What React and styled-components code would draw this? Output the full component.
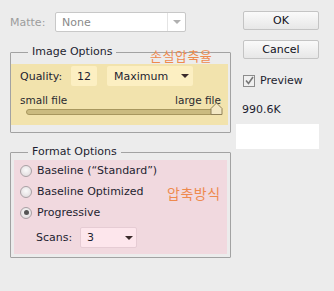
import styled, { createGlobalStyle } from 'styled-components';

const GlobalStyle = createGlobalStyle`
  html, body {
    margin: 0;
    padding: 0;
    background: #ececec;
  }
  body {
    font-family: "DejaVu Sans", Verdana, sans-serif;
    font-size: 11px;
    color: #1e1e30;
  }
`;

const Dialog = styled.div`
  width: 334px;
  height: 291px;
  display: flex;
  background: #ececec;
`;

const LeftColumn = styled.div`
  width: 221px;
  padding: 12px 0 0 10px;
  display: flex;
  flex-direction: column;
`;

const RightColumn = styled.div`
  padding: 11px 0 0 5px;
  display: flex;
  flex-direction: column;
`;

const Row = styled.div`
  display: flex;
  align-items: center;
`;

const Label = styled.span`
  width: ${({ width }) => (width ? `${width}px` : 'auto')};
  color: ${({ muted }) => (muted ? '#9c9c9c' : '#1e1e30')};
  white-space: nowrap;
`;

const Select = styled.div`
  box-sizing: border-box;
  width: ${({ width }) => width}px;
  height: ${({ height }) => height || 20}px;
  margin-left: ${({ offset }) => offset || 0}px;
  display: flex;
  align-items: center;
  padding-left: 6px;
  background: ${({ bg }) => bg || '#fff'};
  border: 1px solid ${({ border }) => border || 'transparent'};
  border-radius: 2px;
  color: ${({ muted }) => (muted ? '#8a8a8a' : '#1e1e30')};
`;

const SelectText = styled.span`
  flex: 1;
`;

const ArrowCell = styled.span`
  width: ${({ divider }) => (divider ? 17 : 14)}px;
  height: 100%;
  display: flex;
  align-items: center;
  justify-content: center;
  border-left: ${({ divider }) => (divider ? '1px solid #e4e4e4' : 'none')};
`;

const Arrow = styled.span`
  width: 0;
  height: 0;
  border-left: 4px solid transparent;
  border-right: 4px solid transparent;
  border-top: 4px solid ${({ color }) => color || '#3a2a2a'};
`;

const Group = styled.div`
  position: relative;
  box-sizing: border-box;
  width: 221px;
  height: ${({ height }) => height}px;
  margin-top: ${({ top }) => top}px;
  border: 1px solid #a2a2a2;
  border-radius: 1px;
  padding: ${({ pad }) => pad};
`;

const Legend = styled.span`
  position: absolute;
  top: -8px;
  left: 17px;
  padding: 0 4px;
  background: #ececec;
  color: #1e1e30;
`;

const Note = styled.span`
  position: absolute;
  left: ${({ left }) => left}px;
  top: ${({ top }) => top}px;
  font-family: "Noto Sans CJK KR", sans-serif;
  font-size: ${({ size }) => size || 13}px;
  color: #ee8a4e;
  letter-spacing: 0.5px;
`;

const Highlight = styled.div`
  box-sizing: border-box;
  height: 100%;
  background: ${({ tone }) => tone};
  padding: ${({ pad }) => pad};
  display: flex;
  flex-direction: column;
`;

const Input = styled.div`
  box-sizing: border-box;
  width: 26px;
  height: 20px;
  display: flex;
  align-items: center;
  padding-left: 6px;
  background: #fcefc2;
  border-radius: 2px;
`;

const SliderLabels = styled.div`
  display: flex;
  justify-content: space-between;
  margin: 8px 7px 0 0;
  font-size: 10.5px;
  color: #2a2a30;
`;

const SliderTrack = styled.div`
  position: relative;
  margin: 3px 8px 0 6px;
  height: 4px;
  border: 1px solid #a8975e;
  border-radius: 3px;
  background: #cbbb80;
`;

const Thumb = styled.svg`
  position: absolute;
  right: -4px;
  top: -8px;
`;

const RadioRow = styled.div`
  position: relative;
  display: flex;
  align-items: center;
  gap: 5px;
  height: 21px;
`;

const Radio = styled.span`
  box-sizing: border-box;
  width: 12px;
  height: 12px;
  border-radius: 50%;
  border: 1px solid #a9a0a4;
  background: radial-gradient(circle at 50% 40%, #fafafa 0%, #dcd6d8 100%);
  display: flex;
  align-items: center;
  justify-content: center;

  &::after {
    content: '';
    width: 5px;
    height: 5px;
    border-radius: 50%;
    background: ${({ checked }) => (checked ? '#555' : 'transparent')};
  }
`;

const ScansRow = styled(Row)`
  margin-top: 4px;
  padding-left: 16px;
`;

const Button = styled.button`
  box-sizing: border-box;
  width: 76px;
  height: 19px;
  margin-left: 7px;
  margin-bottom: ${({ gap }) => gap || 0}px;
  border: 1px solid #c4c4c4;
  border-radius: 2px;
  background: linear-gradient(#fafafa, #e7e7e7);
  font-family: "DejaVu Sans", Verdana, sans-serif;
  font-size: 11px;
  color: #101020;
  padding: 0;
`;

const CheckRow = styled.div`
  display: flex;
  align-items: center;
  gap: 5px;
  margin: 15px 0 0 7px;
`;

const Checkbox = styled.span`
  box-sizing: border-box;
  width: 12px;
  height: 12px;
  border: 1px solid #8c8c8c;
  background: #f0f0f0;
  display: flex;
  align-items: center;
  justify-content: center;
`;

const Size = styled.div`
  margin: 16px 0 0 6px;
`;

const PreviewBox = styled.div`
  width: 83px;
  height: 25px;
  margin-top: 8px;
  background: #fff;
`;

const App = () => {
  return (
    <>
      <GlobalStyle />
      <Dialog>
        <LeftColumn>
          <Row>
            <Label width={45} muted>Matte:</Label>
            <Select width={131} border="#c8c8c8" muted>
              <SelectText>None</SelectText>
              <ArrowCell divider>
                <Arrow color="#b0b0b0" />
              </ArrowCell>
            </Select>
          </Row>

          <Group height={81} top={20} pad="11px 2px 7px 0">
            <Legend>Image Options</Legend>
            <Note left={139} top={-7}>손실압축율</Note>
            <Highlight tone="#f2e3ad" pad="2px 0 0 9px">
              <Row>
                <Label width={51}>Quality:</Label>
                <Input>12</Input>
                <Select width={86} bg="#fcefc2" offset={10}>
                  <SelectText>Maximum</SelectText>
                  <ArrowCell>
                    <Arrow />
                  </ArrowCell>
                </Select>
              </Row>
              <SliderLabels>
                <span>small file</span>
                <span>large file</span>
              </SliderLabels>
              <SliderTrack>
                <Thumb width="13" height="13" viewBox="0 0 13 13">
                  <path d="M1 12.5 V6.5 L6.5 1 L12 6.5 V12.5 Z" fill="#f3e8c4" stroke="#8f8058" />
                </Thumb>
              </SliderTrack>
            </Highlight>
          </Group>

          <Group height={106} top={19} pad="7px 3px 3px 3px">
            <Legend>Format Options</Legend>
            <Highlight tone="#f1d9df" pad="0 0 0 6px">
              <RadioRow>
                <Radio />
                <span>Baseline (“Standard”)</span>
              </RadioRow>
              <RadioRow>
                <Radio />
                <span>Baseline Optimized</span>
                <Note left={147} top={2} size={14}>압축방식</Note>
              </RadioRow>
              <RadioRow>
                <Radio checked />
                <span>Progressive</span>
              </RadioRow>
              <ScansRow>
                <Label width={44}>Scans:</Label>
                <Select width={57} height={21} bg="#fde6ec" border="#e6ccd4">
                  <SelectText>3</SelectText>
                  <ArrowCell>
                    <Arrow />
                  </ArrowCell>
                </Select>
              </ScansRow>
            </Highlight>
          </Group>
        </LeftColumn>

        <RightColumn>
          <Button gap={10}>OK</Button>
          <Button>Cancel</Button>
          <CheckRow>
            <Checkbox>
              <svg width="9" height="9" viewBox="0 0 9 9">
                <path d="M1 4.5 L3.5 7.5 L8 1" fill="none" stroke="#777" strokeWidth="1.6" />
              </svg>
            </Checkbox>
            <span>Preview</span>
          </CheckRow>
          <Size>990.6K</Size>
          <PreviewBox />
        </RightColumn>
      </Dialog>
    </>
  );
};

export default App;
